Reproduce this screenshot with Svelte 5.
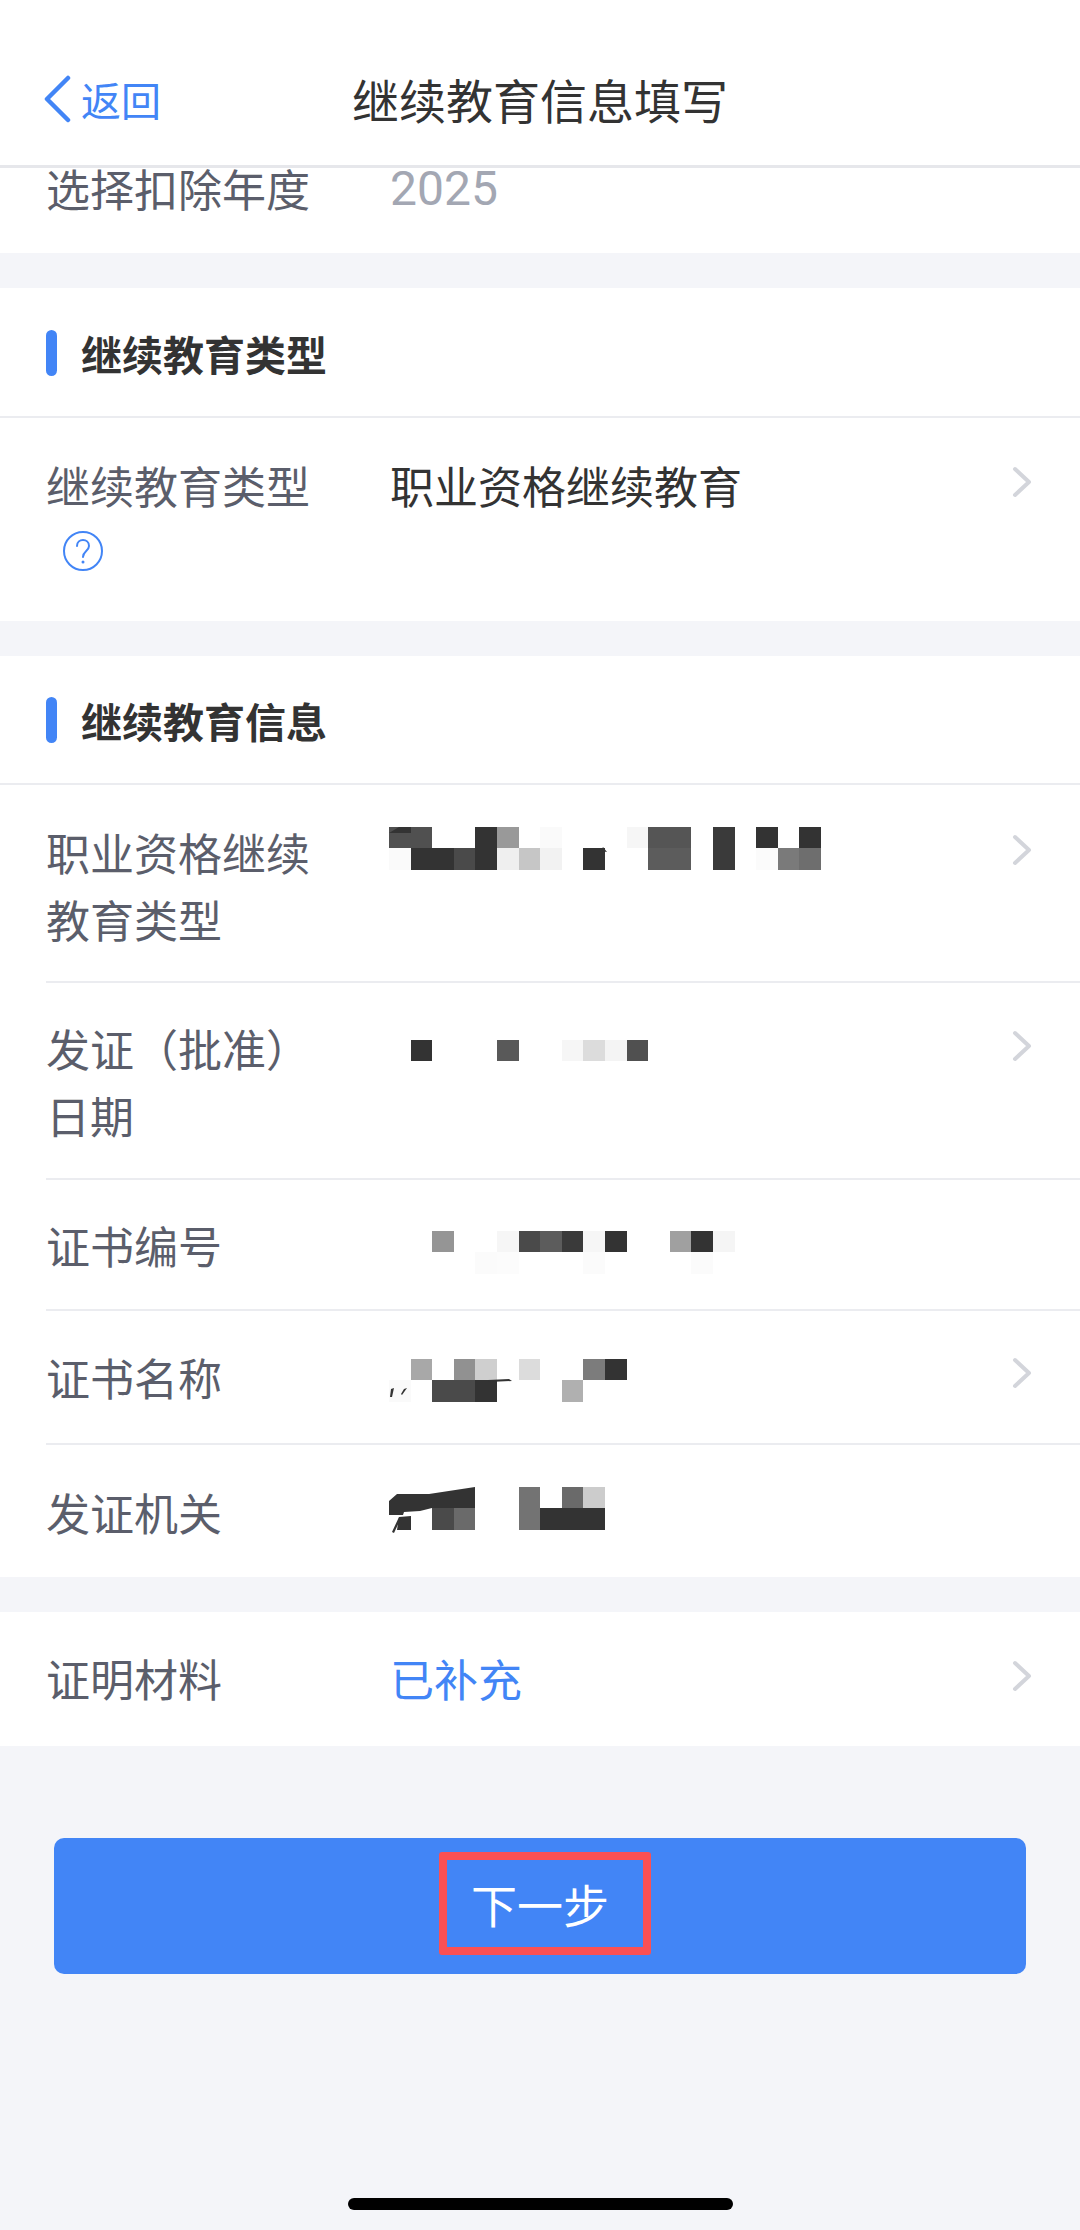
<script>
	// mosaic cells: [col, row, colour]. Cell is 21.6 x 21.3
	const CW = 21.6;
	const CH = 21.3;

	const mosaicA = [
		[0,0,'#505050'],[1,0,'#505050'],[4,0,'#333'],[5,0,'#999'],[7,0,'#fafafa'],[11,0,'#f6f6f6'],
		[12,0,'#555'],[13,0,'#555'],[15,0,'#3a3a3a'],[17,0,'#333'],[19,0,'#333'],
		[0,1,'#fafafa'],[1,1,'#333'],[2,1,'#333'],[3,1,'#4a4a4a'],[4,1,'#333'],[5,1,'#efefef'],
		[6,1,'#c6c6c6'],[7,1,'#f2f2f2'],[9,1,'#333'],[12,1,'#5c5c5c'],[13,1,'#5c5c5c'],
		[15,1,'#3a3a3a'],[17,1,'#fbfbfb'],[18,1,'#7a7a7a'],[19,1,'#6e6e6e']
	];
	const mosaicB = [
		[1,0,'#333'],[5,0,'#595959'],[8,0,'#f6f6f6'],[9,0,'#dcdcdc'],[10,0,'#f4f4f4'],[11,0,'#505050']
	];
	const mosaicC = [
		[2,0,'#959595'],[5,0,'#f6f6f6'],[6,0,'#4a4a4a'],[7,0,'#5c5c5c'],[8,0,'#3a3a3a'],[9,0,'#f6f6f6'],
		[10,0,'#333'],[13,0,'#a0a0a0'],[14,0,'#333'],[15,0,'#f5f5f5'],
		[4,1,'#fbfbfb'],[5,1,'#fcfcfc'],[9,1,'#fbfbfb'],[14,1,'#fbfbfb']
	];
	const mosaicD = [
		[1,0,'#a8a8a8'],[3,0,'#919191'],[4,0,'#cfcfcf'],[6,0,'#dcdcdc'],[9,0,'#7c7c7c'],[10,0,'#333'],
		[0,1,'#fafafa'],[2,1,'#4a4a4a'],[3,1,'#4a4a4a'],[4,1,'#333'],[8,1,'#b0b0b0']
	];
	const mosaicE = [
		[6,0,'#737373'],[8,0,'#6a6a6a'],[9,0,'#ccc'],
		[2,1,'#4a4a4a'],[3,1,'#6a6a6a'],[6,1,'#737373'],[7,1,'#333'],[8,1,'#333'],[9,1,'#333']
	];

	// what is left of the text where the mosaic missed it
	const scrapsA = ['0,6 10,0 22,0 22,6 0,6', '212,24 214,20 218,25'];
	const scrapsD = ['2,30 5,29 3,38 1,38', '15,30 18,29 13,36 12,35', '99,21 120,20 123,22 100,23'];
	const scrapsE = [
		'0,14 8,7 40,7 86,0 86,21 43,21 31,24 15,25 14,28 0,28',
		'10,30 22,29 22,43 8,43',
		'3,45 10,30 12,31 5,46'
	];
</script>

{#snippet mosaic(cells, scraps = [], top = 0)}
	<svg class="mosaic" style="margin-top:{top}px" width="440" height="52" viewBox="0 0 440 52">
		{#each cells as [col, row, fill]}
			<rect x={col * CW} y={row * CH} width={CW} height={CH} {fill} shape-rendering="crispEdges" />
		{/each}
		{#each scraps as points}
			<polygon {points} fill="#333" />
		{/each}
	</svg>
{/snippet}

{#snippet chevron(top)}
	<svg class="chevron" style="margin-top:{top}px" width="24" height="32" viewBox="0 0 24 32">
		<path d="M4 3 L18 16 L4 29" fill="none" stroke="#d3d5db" stroke-width="4" stroke-linecap="round" stroke-linejoin="round" />
	</svg>
{/snippet}

<div class="page">
	<header class="nav">
		<div class="back">
			<svg width="28" height="48" viewBox="0 0 28 48">
				<path d="M25 3 L4 24 L25 45" fill="none" stroke="#4285f6" stroke-width="4.5" stroke-linecap="round" stroke-linejoin="round" />
			</svg>
			<span>返回</span>
		</div>
		<div class="title">继续教育信息填写</div>
	</header>

	<div class="year">
		<div class="label">选择扣除年度</div>
		<div class="num">2025</div>
	</div>

	<section>
		<div class="head"><i></i>继续教育类型</div>
		<div class="row type">
			<div class="label">继续教育类型<svg class="help" width="42" height="42" viewBox="0 0 42 42">
					<circle cx="21" cy="21" r="19" fill="none" stroke="#4285f6" stroke-width="2" />
					<path d="M15 16 C15 8 27 8 27 16 C27 21 21 21 21 27" fill="none" stroke="#4285f6" stroke-width="2" stroke-linecap="round" />
					<circle cx="21" cy="32" r="1.5" fill="#4285f6" />
				</svg></div>
			<div class="value">职业资格继续教育</div>
			{@render chevron(14)}
		</div>
	</section>

	<section>
		<div class="head info"><i></i>继续教育信息</div>
		<div class="row first">
			<div class="label">职业资格继续<br />教育类型</div>
			<div class="value">{@render mosaic(mosaicA, scrapsA, 8)}</div>
			{@render chevron(15)}
		</div>
		<div class="row date">
			<div class="label">发证（批准）<br />日期</div>
			<div class="value">{@render mosaic(mosaicB, [], 25)}</div>
			{@render chevron(15)}
		</div>
		<div class="row number">
			<div class="label">证书编号</div>
			<div class="value">{@render mosaic(mosaicC, [], 19)}</div>
		</div>
		<div class="row name">
			<div class="label">证书名称</div>
			<div class="value">{@render mosaic(mosaicD, scrapsD, 15)}</div>
			{@render chevron(13)}
		</div>
		<div class="row issuer">
			<div class="label">发证机关</div>
			<div class="value">{@render mosaic(mosaicE, scrapsE, 8)}</div>
		</div>
	</section>

	<section>
		<div class="row proof">
			<div class="label">证明材料</div>
			<div class="value link">已补充</div>
			{@render chevron(15)}
		</div>
	</section>

	<div class="actions">
		<button class="next"><span>下一步</span></button>
	</div>

	<div class="home"></div>
</div>

<style>
	:global(body) {
		margin: 0;
		background: #f4f5f9;
	}
	.page {
		width: 1080px;
		height: 2230px;
		overflow: hidden;
		display: flex;
		flex-direction: column;
		background: #f4f5f9;
		color: #333;
		font-family: "Noto Sans CJK SC", "Noto Sans", sans-serif;
	}

	/* top bar */
	.nav {
		height: 168px;
		flex: none;
		box-sizing: border-box;
		background: #fff;
		display: flex;
		align-items: center;
		position: relative;
		padding: 32px 0 0 43px;
		border-bottom: 3px solid #e6e7eb;
	}
	.back {
		display: flex;
		align-items: center;
		gap: 10px;
		color: #4285f6;
		font-size: 40px;
		line-height: 48px;
	}
	.title {
		position: absolute;
		left: 0;
		right: 0;
		top: 71px;
		text-align: center;
		font-size: 47px;
		line-height: 56px;
		color: #333;
	}

	.year {
		height: 85px;
		flex: none;
		background: #fff;
		display: flex;
		padding-left: 46px;
		box-sizing: border-box;
		margin-bottom: 35px;
	}
	.year .label {
		line-height: 40px;
	}
	.num {
		font-family: Roboto, sans-serif;
		font-size: 48px;
		line-height: 42px;
		color: #a3a7b3;
	}

	section {
		background: #fff;
		margin-bottom: 35px;
	}
	.head {
		height: 128px;
		box-sizing: border-box;
		display: flex;
		align-items: center;
		gap: 24px;
		padding: 2px 0 0 46px;
		font-size: 41px;
		font-weight: 700;
		color: #333;
	}
	.head.info {
		height: 127px;
		padding-top: 1px;
	}
	.head i {
		width: 11px;
		height: 46px;
		border-radius: 6px;
		background: #4285f6;
	}

	.row {
		display: flex;
		align-items: flex-start;
		margin-left: 46px;
		border-top: 2px solid #ebecf0;
		line-height: 67px;
		font-size: 44px;
	}
	.row.first,
	.row.type,
	.row.proof {
		margin-left: 0;
		padding-left: 46px;
	}
	.row.type {
		padding-top: 34px;
		padding-bottom: 49px;
	}
	.row.first {
		padding-top: 34px;
		padding-bottom: 28px;
	}
	.row.date {
		padding-top: 32px;
		padding-bottom: 29px;
	}
	.row.number {
		padding-top: 32px;
		padding-bottom: 30px;
	}
	.row.name {
		padding-top: 33px;
		padding-bottom: 32px;
	}
	.row.issuer {
		padding-top: 34px;
		padding-bottom: 31px;
	}
	.row.proof {
		border-top: none;
		padding-top: 33px;
		padding-bottom: 34px;
	}

	.label {
		width: 344px;
		flex: none;
		font-size: 44px;
		color: #5b5e6b;
	}
	.help {
		display: block;
		margin: 11px 0 0 16px;
	}
	.value {
		flex: 1;
		min-width: 0;
		height: 67px;
		color: #333;
	}
	.link {
		color: #4285f6;
	}
	.mosaic {
		display: block;
		margin-left: -1px;
	}
	.chevron {
		flex: none;
		margin-right: 45px;
	}

	.actions {
		padding: 57px 54px 0;
	}
	.next {
		width: 100%;
		height: 136px;
		border: none;
		border-radius: 10px;
		background: #4285f6;
		color: #fff;
		font: inherit;
		font-size: 46px;
		display: flex;
		align-items: center;
		justify-content: center;
		padding: 0 0 0 10px;
	}
	.next span {
		width: 212px;
		height: 103px;
		box-sizing: border-box;
		border: 8.5px solid #fb5053;
		border-radius: 3px;
		display: flex;
		align-items: center;
		justify-content: center;
		margin-bottom: 6px;
		padding-right: 10px;
	}

	.home {
		width: 385px;
		height: 12px;
		border-radius: 6px;
		background: #000;
		margin: auto auto 20px;
	}
</style>
